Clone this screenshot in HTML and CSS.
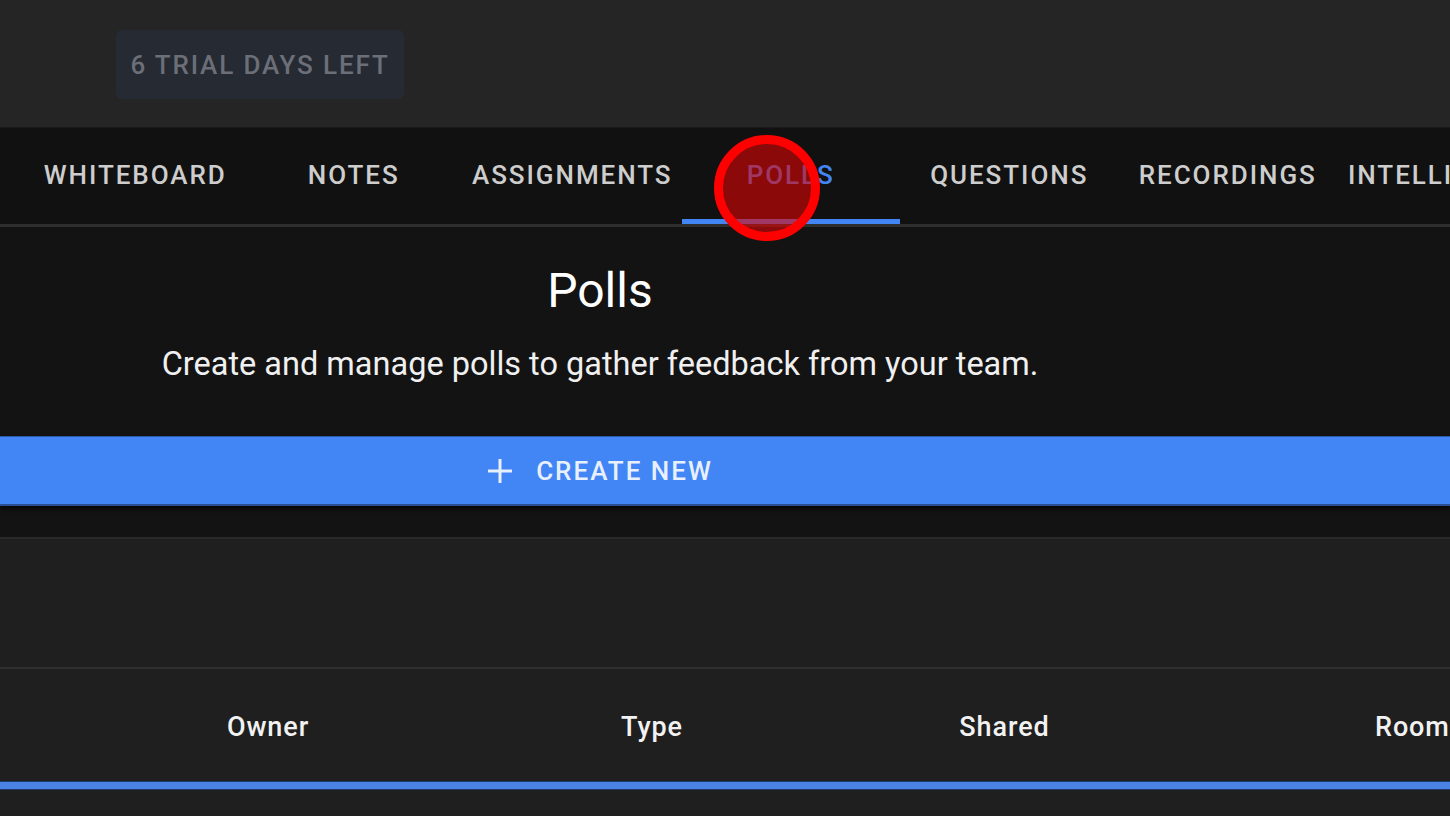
FILE: index.html
```html
<!DOCTYPE html>
<html lang="en">
<head>
<meta charset="utf-8">
<title>Polls</title>
<link rel="stylesheet" href="styles.css">
</head>
<body>
<div class="page">
  <header class="topbar">
    <div class="trial-badge">6 TRIAL DAYS LEFT</div>
  </header>
  <nav class="tabs">
    <div class="tab">WHITEBOARD</div>
    <div class="tab">NOTES</div>
    <div class="tab">ASSIGNMENTS</div>
    <div class="tab active">POLLS</div>
    <div class="tab">QUESTIONS</div>
    <div class="tab">RECORDINGS</div>
    <div class="tab last">INTELLIGENCE</div>
  </nav>
  <section class="intro">
    <div class="intro-inner">
      <h1 class="title">Polls</h1>
      <p class="subtitle">Create and manage polls to gather feedback from your team.</p>
    </div>
    <button class="create-btn">
      <span class="create-inner">
        <svg class="plus" width="26" height="26" viewBox="0 0 26 26"><path d="M13 1v24M1 13h24" stroke="#e8f0fe" stroke-width="3" fill="none"/></svg>
        <span>CREATE NEW</span>
      </span>
    </button>
  </section>
  <section class="list">
    <div class="filters"></div>
    <div class="table-head">
      <div class="th c1">Owner</div>
      <div class="th c2">Type</div>
      <div class="th c3">Shared</div>
      <div class="th c4">Room</div>
    </div>
    <div class="progress"></div>
  </section>
  <div class="annotation"></div>
</div>
</body>
</html>
```

FILE: styles.css
```css
* { box-sizing: border-box; }
html, body { margin: 0; padding: 0; }
body {
  width: 1450px;
  height: 816px;
  overflow: hidden;
  background: #1f1f1f;
  font-family: Roboto, "Liberation Sans", sans-serif;
}
.page { position: relative; width: 1450px; height: 816px; overflow: hidden; }

.topbar {
  height: 128px;
  background: #252525;
  padding: 30px 0 0 116px;
  border-bottom: 1px solid #1a1a1a;
}
.trial-badge {
  width: 288px;
  height: 69px;
  background: #252a33;
  border-radius: 6px;
  color: #6c6f77;
  font-size: 26px;
  font-weight: 500;
  letter-spacing: 1.85px;
  display: flex;
  align-items: center;
  justify-content: center;
}

.tabs {
  height: 99px;
  background: #111111;
  display: flex;
  padding-left: 26px;
  border-bottom: 3px solid #2e2e2e;
  white-space: nowrap;
  overflow: hidden;
}
.tab {
  flex: 0 0 218.5px;
  display: flex;
  align-items: center;
  justify-content: center;
  color: #cdcdcd;
  font-size: 26px;
  font-weight: 500;
  letter-spacing: 1.95px;
  border-bottom: 5px solid transparent;
  padding-top: 3px;
}
.tab.active { color: #4285f4; border-bottom-color: #4285f4; }
.tab.last { flex: 0 0 auto; justify-content: flex-start; padding-left: 11px; }

.intro {
  background: #131313;
  height: 312px;
  padding-top: 34px;
  border-bottom: 2px solid #2a2a2a;
}
.intro-inner { width: 1200px; text-align: center; }
.title {
  margin: 0;
  color: #ffffff;
  font-size: 48px;
  font-weight: 400;
  line-height: 60px;
}
.subtitle {
  margin: 22px 0 0;
  color: #f0f0f0;
  font-size: 32.5px;
  font-weight: 400;
  line-height: 42px;
}
.create-btn {
  display: block;
  width: 100%;
  height: 70px;
  margin-top: 51px;
  border: none;
  border-top: 1px solid #2d5aa8;
  border-bottom: 2px solid #2a4f92;
  background: #4285f4;
  padding: 0;
  font-family: inherit;
  box-shadow: 0 3px 4px rgba(0,0,0,0.6);
}
.create-inner {
  width: 1200px;
  display: flex;
  align-items: center;
  justify-content: center;
  gap: 23px;
  color: #e8f0fe;
  font-size: 26px;
  font-weight: 500;
  letter-spacing: 2px;
}

.list { background: #1f1f1f; }
.filters {
  height: 130px;
  border-bottom: 2px solid #2e2e2e;
}
.table-head {
  display: grid;
  grid-template-columns: 536px 232px 473px 1fr;
  height: 112px;
  align-items: center;
  padding-top: 3px;
}
.th {
  color: #f2f2f2;
  font-size: 27px;
  font-weight: 500;
  letter-spacing: 0.9px;
  text-align: center;
  white-space: nowrap;
}
.th.c4 { text-align: left; padding-left: 134px; }
.progress {
  height: 9px;
  background: #4a82e6;
  border-top: 1px solid #1d3a6a;
  border-bottom: 1px solid #1d3a6a;
}

.annotation {
  position: absolute;
  left: 714px;
  top: 135px;
  width: 106px;
  height: 106px;
  border-radius: 50%;
  border: 9px solid #ff0000;
  background: rgba(222, 5, 5, 0.6);
}
```
